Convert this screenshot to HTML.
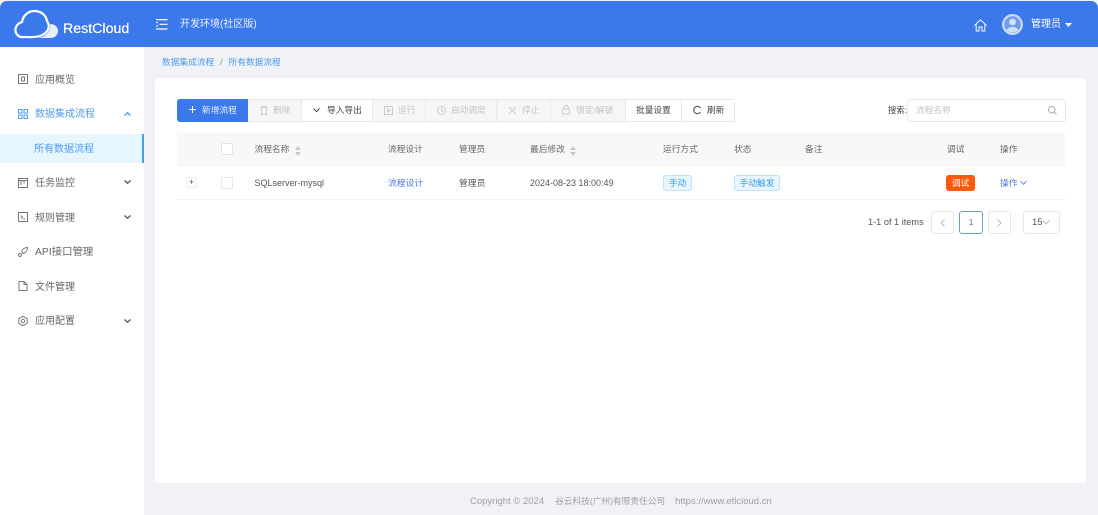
<!DOCTYPE html>
<html lang="zh"><head><meta charset="utf-8"><style>
*{box-sizing:border-box}
html{margin:0;padding:0;width:1098px;height:515px;overflow:hidden;background:#f0f2f5}
body{margin:0;padding:0;width:1098px;height:515px;overflow:hidden;background:#f0f2f5;font-family:"Liberation Sans","Noto Sans CJK SC",sans-serif;font-size:8.7px;color:#555;filter:blur(.3px)}
.a{position:absolute;white-space:nowrap}
svg{position:absolute;overflow:visible}
.m{left:35px;font-size:10px;color:#666;line-height:14px}
.ic{left:18px;fill:none;stroke:#777;stroke-width:1}
.ch{left:124px;fill:none;stroke:#555;stroke-width:1.3}
.btn{position:absolute;top:99px;height:23px;border:1px solid #e8e9ec;border-left:0;background:#f6f6f6;color:#c4c4c4;line-height:21px;font-size:8.7px}
.btn.w{background:#fff;color:#444}
.btn span{position:absolute;white-space:nowrap;top:0}
.th{top:137px;line-height:24px;color:#666;font-size:8.7px;position:absolute;white-space:nowrap}
.td{top:171px;line-height:24px;color:#555;font-size:8.8px;position:absolute;white-space:nowrap}
.cb{position:absolute;left:221px;width:12px;height:12px;background:#fff;border:1px solid #e6e6e6;border-radius:1px}
.tag{position:absolute;top:175px;height:16px;border:1px solid #bfe3f9;background:#e6f5fe;border-radius:3px;color:#3d9ce0;line-height:14px;text-align:center;font-size:8.7px}
.pg{position:absolute;top:211px;height:23px;border:1px solid #e9e9e9;border-radius:3px;background:#fff;text-align:center;line-height:21px}
</style></head><body>
<div class="a" style="left:0;top:1px;width:1098px;height:46px;background:#3b78ea;border-radius:7px 7px 0 0"></div>
<svg style="left:0;top:0" width="70" height="47"><path d="M38 38C46 37 51 31 50 24C55 24 58 27 58 31C58 36 54 38 50 38Z" fill="#fff" opacity=".88"/><path d="M24 37C18 38 15 33 15.5 29C16 25 19 23 22 22C23 15 29 11 34 11C41 11 46 15 47 21C50 25 49 31 44 34C38 38 30 37 24 37Z" fill="none" stroke="#fff" stroke-width="2.2"/></svg>
<div class="a" style="left:63px;top:20px;font-size:14.2px;line-height:18px;color:#fff;-webkit-text-stroke:.2px #fff">RestCloud</div>
<svg style="left:156px;top:19px" width="12" height="11" fill="none" stroke="#fff" stroke-width="1.2"><path d="M0 .6H11.5M3.5 5.3H11.5M0 10H11.5M.3 3.5H2M.3 7H2"/></svg>
<div class="a" style="left:180px;top:17px;font-size:10px;line-height:16px;color:#eef3ff">开发环境(社区版)</div>
<svg style="left:974px;top:19px" width="13" height="13" fill="none" stroke="#fff" stroke-width="1"><path d="M.5 6.5 6.5 .8 12.5 6.5M2.2 5.5V12H5V8H8V12H10.8V5.5"/></svg>
<div class="a" style="left:1002px;top:14px;width:21px;height:21px;border-radius:50%;background:#c9d9f7"></div>
<svg style="left:1004px;top:16px" width="17" height="17"><circle cx="8.5" cy="8.5" r="8.2" fill="#6f9cec"/><circle cx="8.5" cy="6" r="3.4" fill="#cfe0fb"/><path d="M2.8 14C4 10 13 10 14.2 14A8 8 0 0 1 2.8 14Z" fill="#cfe0fb"/></svg>
<div class="a" style="left:1031px;top:17px;font-size:10px;line-height:15px;color:#fff">管理员</div>
<svg style="left:1065px;top:23px" width="8" height="4"><path d="M0 0H7L3.5 4Z" fill="#fff"/></svg>

<div class="a" style="left:0;top:47px;width:144px;height:468px;background:#fff"></div>
<div class="a" style="left:0;top:134px;width:144px;height:29px;background:#e6f6ff;border-right:2px solid #4e9bea"></div>
<svg class="ic" style="top:74px" width="10" height="10"><rect x=".5" y=".5" width="9" height="9"/><rect x="3.5" y="3" width="3" height="4"/></svg>
<div class="a m" style="top:74px">应用概览</div>
<svg class="ic" style="top:109px;stroke:#4e9bea" width="10" height="10"><rect x=".5" y=".5" width="3.5" height="3.5"/><rect x="6" y=".5" width="3.5" height="3.5"/><rect x=".5" y="6" width="3.5" height="3.5"/><rect x="6" y="6" width="3.5" height="3.5"/></svg>
<div class="a m" style="top:108px;color:#4e9bea">数据集成流程</div>
<svg class="ch" style="top:112px;stroke:#4e9bea" width="7" height="4"><path d="M.5 3.5 3.5 .8 6.5 3.5"/></svg>
<div class="a m" style="top:143px;left:34px;color:#4e9bea">所有数据流程</div>
<svg class="ic" style="top:178px" width="10" height="10"><rect x=".5" y=".5" width="9" height="9"/><path d="M.5 2.5H9.5M3 3V7M6 3V5.5"/></svg>
<div class="a m" style="top:177px">任务监控</div>
<svg class="ch" style="top:180px" width="7" height="4"><path d="M.5 .5 3.5 3.2 6.5 .5"/></svg>
<svg class="ic" style="top:212px" width="10" height="10"><rect x=".5" y=".5" width="9" height="9"/><path d="M3 3.5 4.5 5 3 6.5M5 7H7"/></svg>
<div class="a m" style="top:212px">规则管理</div>
<svg class="ch" style="top:215px" width="7" height="4"><path d="M.5 .5 3.5 3.2 6.5 .5"/></svg>
<svg class="ic" style="top:247px" width="10" height="10"><path d="M9.5 .5C7 .5 4.5 2 3.5 4.5L5.5 6.5C8 5.5 9.5 3 9.5 .5Z"/><circle cx="2" cy="8" r="1.5"/></svg>
<div class="a m" style="top:246px;font-size:10.4px">API接口管理</div>
<svg class="ic" style="top:281px" width="10" height="10"><path d="M1 .5H6L9 3.5V9.5H1ZM6 .5V3.5H9"/></svg>
<div class="a m" style="top:281px">文件管理</div>
<svg class="ic" style="top:316px" width="10" height="10"><path d="M5 .3 9.2 2.7V7.3L5 9.7.8 7.3V2.7Z"/><circle cx="5" cy="5" r="1.7"/></svg>
<div class="a m" style="top:315px">应用配置</div>
<svg class="ch" style="top:319px" width="7" height="4"><path d="M.5 .5 3.5 3.2 6.5 .5"/></svg>

<div class="a" style="left:162px;top:56px;font-size:8.7px;line-height:12px;color:#4e9bea">数据集成流程<span style="color:#888;margin:0 6px">/</span>所有数据流程</div>
<div class="a" style="left:155px;top:78px;width:931px;height:405px;background:#fff;border-radius:3px"></div>

<div class="btn" style="left:177px;width:71px;background:#3b78ea;border:0;border-radius:3px 0 0 3px;color:#fff;line-height:23px"><span style="left:25px;color:#e8f0ff">新增流程</span></div>
<svg style="left:189px;top:106px" width="7" height="7" stroke="#fff" fill="none"><path d="M3.5 0V7M0 3.5H7"/></svg>
<div class="btn" style="left:248px;width:54px"><span style="left:25px">删除</span></div>
<svg style="left:260px;top:106px" width="8" height="9" fill="none" stroke="#ccc"><path d="M.5 1.5H7.5M1.5 1.5V8.5H6.5V1.5M3 1V.3H5V1"/></svg>
<div class="btn w" style="left:302px;width:71px"><span style="left:25px">导入导出</span></div>
<svg style="left:313px;top:108px" width="7" height="5" fill="none" stroke="#444"><path d="M.5 .5 3.5 3.7 6.5 .5"/></svg>
<div class="btn" style="left:373px;width:53px"><span style="left:25px">运行</span></div>
<svg style="left:384px;top:106px" width="9" height="9" fill="none" stroke="#ccc"><rect x=".5" y=".5" width="8" height="8"/><path d="M3.5 3V6L6 4.5Z"/></svg>
<div class="btn" style="left:426px;width:71px"><span style="left:25px">启动调度</span></div>
<svg style="left:437px;top:106px" width="9" height="9" fill="none" stroke="#ccc"><circle cx="4.5" cy="4.5" r="4"/><path d="M4.5 2V4.5L6.5 5.5"/></svg>
<div class="btn" style="left:497px;width:54px"><span style="left:25px">停止</span></div>
<svg style="left:509px;top:107px" width="7" height="7" fill="none" stroke="#ccc"><path d="M0 0 7 7M7 0 0 7"/></svg>
<div class="btn" style="left:551px;width:75px"><span style="left:25px">锁定/解锁</span></div>
<svg style="left:562px;top:105px" width="8" height="10" fill="none" stroke="#ccc"><rect x=".5" y="4" width="7" height="5"/><path d="M2 4V2C2 0 6 0 6 2V4"/></svg>
<div class="btn w" style="left:626px;width:56px"><span style="left:10px">批量设置</span></div>
<div class="btn w" style="left:682px;width:53px;border-radius:0 3px 3px 0"><span style="left:25px">刷新</span></div>
<svg style="left:693px;top:106px" width="8" height="8" fill="none" stroke="#444"><path d="M7.5 2A3.7 3.7 0 1 0 7.5 6"/></svg>

<div class="a" style="left:888px;top:104px;font-size:8.4px;line-height:13px;color:#444">搜索:</div>
<div class="a" style="left:907px;top:99px;width:159px;height:23px;border:1px solid #e8e9ec;border-radius:3px;background:#fff"></div>
<div class="a" style="left:916px;top:104px;font-size:8.7px;line-height:13px;color:#c4c4c4">流程名称</div>
<svg style="left:1048px;top:106px" width="9" height="9" fill="none" stroke="#aaa"><circle cx="3.7" cy="3.7" r="3.2"/><path d="M6 6 8.5 8.5"/></svg>

<div class="a" style="left:177px;top:133px;width:888px;height:33px;background:#f7f8f9;border-bottom:1px solid #f0f0f0"></div>
<div class="cb" style="top:143px"></div>
<div class="th" style="left:254.5px">流程名称</div>
<svg style="left:295px;top:146px" width="6" height="10" fill="#c8c8c8"><path d="M3 0 6 4H0ZM0 6H6L3 10Z"/></svg>
<div class="th" style="left:388px">流程设计</div>
<div class="th" style="left:459px">管理员</div>
<div class="th" style="left:530px">最后修改</div>
<svg style="left:570px;top:146px" width="6" height="10" fill="#c8c8c8"><path d="M3 0 6 4H0ZM0 6H6L3 10Z"/></svg>
<div class="th" style="left:663px">运行方式</div>
<div class="th" style="left:734px">状态</div>
<div class="th" style="left:805px">备注</div>
<div class="th" style="left:947px">调试</div>
<div class="th" style="left:1000px">操作</div>

<div class="a" style="left:177px;top:199px;width:888px;height:1px;background:#f0f0f0"></div>
<div class="a" style="left:186px;top:177px;width:11px;height:11px;border:1px solid #eee;border-radius:2px;text-align:center;line-height:9px;font-size:9px;color:#555">+</div>
<div class="cb" style="top:177px"></div>
<div class="td" style="left:254.5px;font-size:9px">SQLserver-mysql</div>
<div class="td" style="left:388px;color:#4f78e0">流程设计</div>
<div class="td" style="left:459px">管理员</div>
<div class="td" style="left:530px;font-size:9px">2024-08-23 18:00:49</div>
<div class="tag" style="left:663px;width:29px">手动</div>
<div class="tag" style="left:734px;width:46px">手动触发</div>
<div class="a" style="left:946px;top:175px;width:29px;height:16px;background:#f95a0e;border-radius:3px;color:#fff;text-align:center;line-height:16px">调试</div>
<div class="td" style="left:1000px;color:#4f78e0">操作</div>
<svg style="left:1020px;top:181px" width="7" height="4" fill="none" stroke="#4f78e0" stroke-width=".9"><path d="M.5 .3 3.5 3.3 6.5 .3"/></svg>

<div class="a" style="left:868px;top:215px;font-size:9.2px;line-height:14px;color:#555">1-1 of 1 items</div>
<div class="pg" style="left:931px;width:23px"></div>
<svg style="left:940px;top:219px" width="5" height="8" fill="none" stroke="#bbb"><path d="M4.5 .5 1 4 4.5 7.5"/></svg>
<div class="pg" style="left:959px;width:24px;border-color:#6f9bd8;color:#4f78c0">1</div>
<div class="pg" style="left:988px;width:23px"></div>
<svg style="left:997px;top:219px" width="5" height="8" fill="none" stroke="#bbb"><path d="M.5 .5 4 4 .5 7.5"/></svg>
<div class="pg" style="left:1023px;width:37px"></div>
<div class="a" style="left:1032px;top:216px;line-height:14px;font-size:9.5px;color:#555">15</div>
<svg style="left:1042px;top:220px" width="8" height="5" fill="none" stroke="#bbb"><path d="M.5 .5 4 4 7.5 .5"/></svg>

<div class="a" style="left:470px;top:494px;font-size:9.5px;line-height:14px;color:#a0a0a0">Copyright © 2024<span style="margin-left:11px;font-size:8.7px">谷云科技(广州)有限责任公司</span><span style="margin-left:10px">https://www.etlcloud.cn</span></div>
</body></html>
